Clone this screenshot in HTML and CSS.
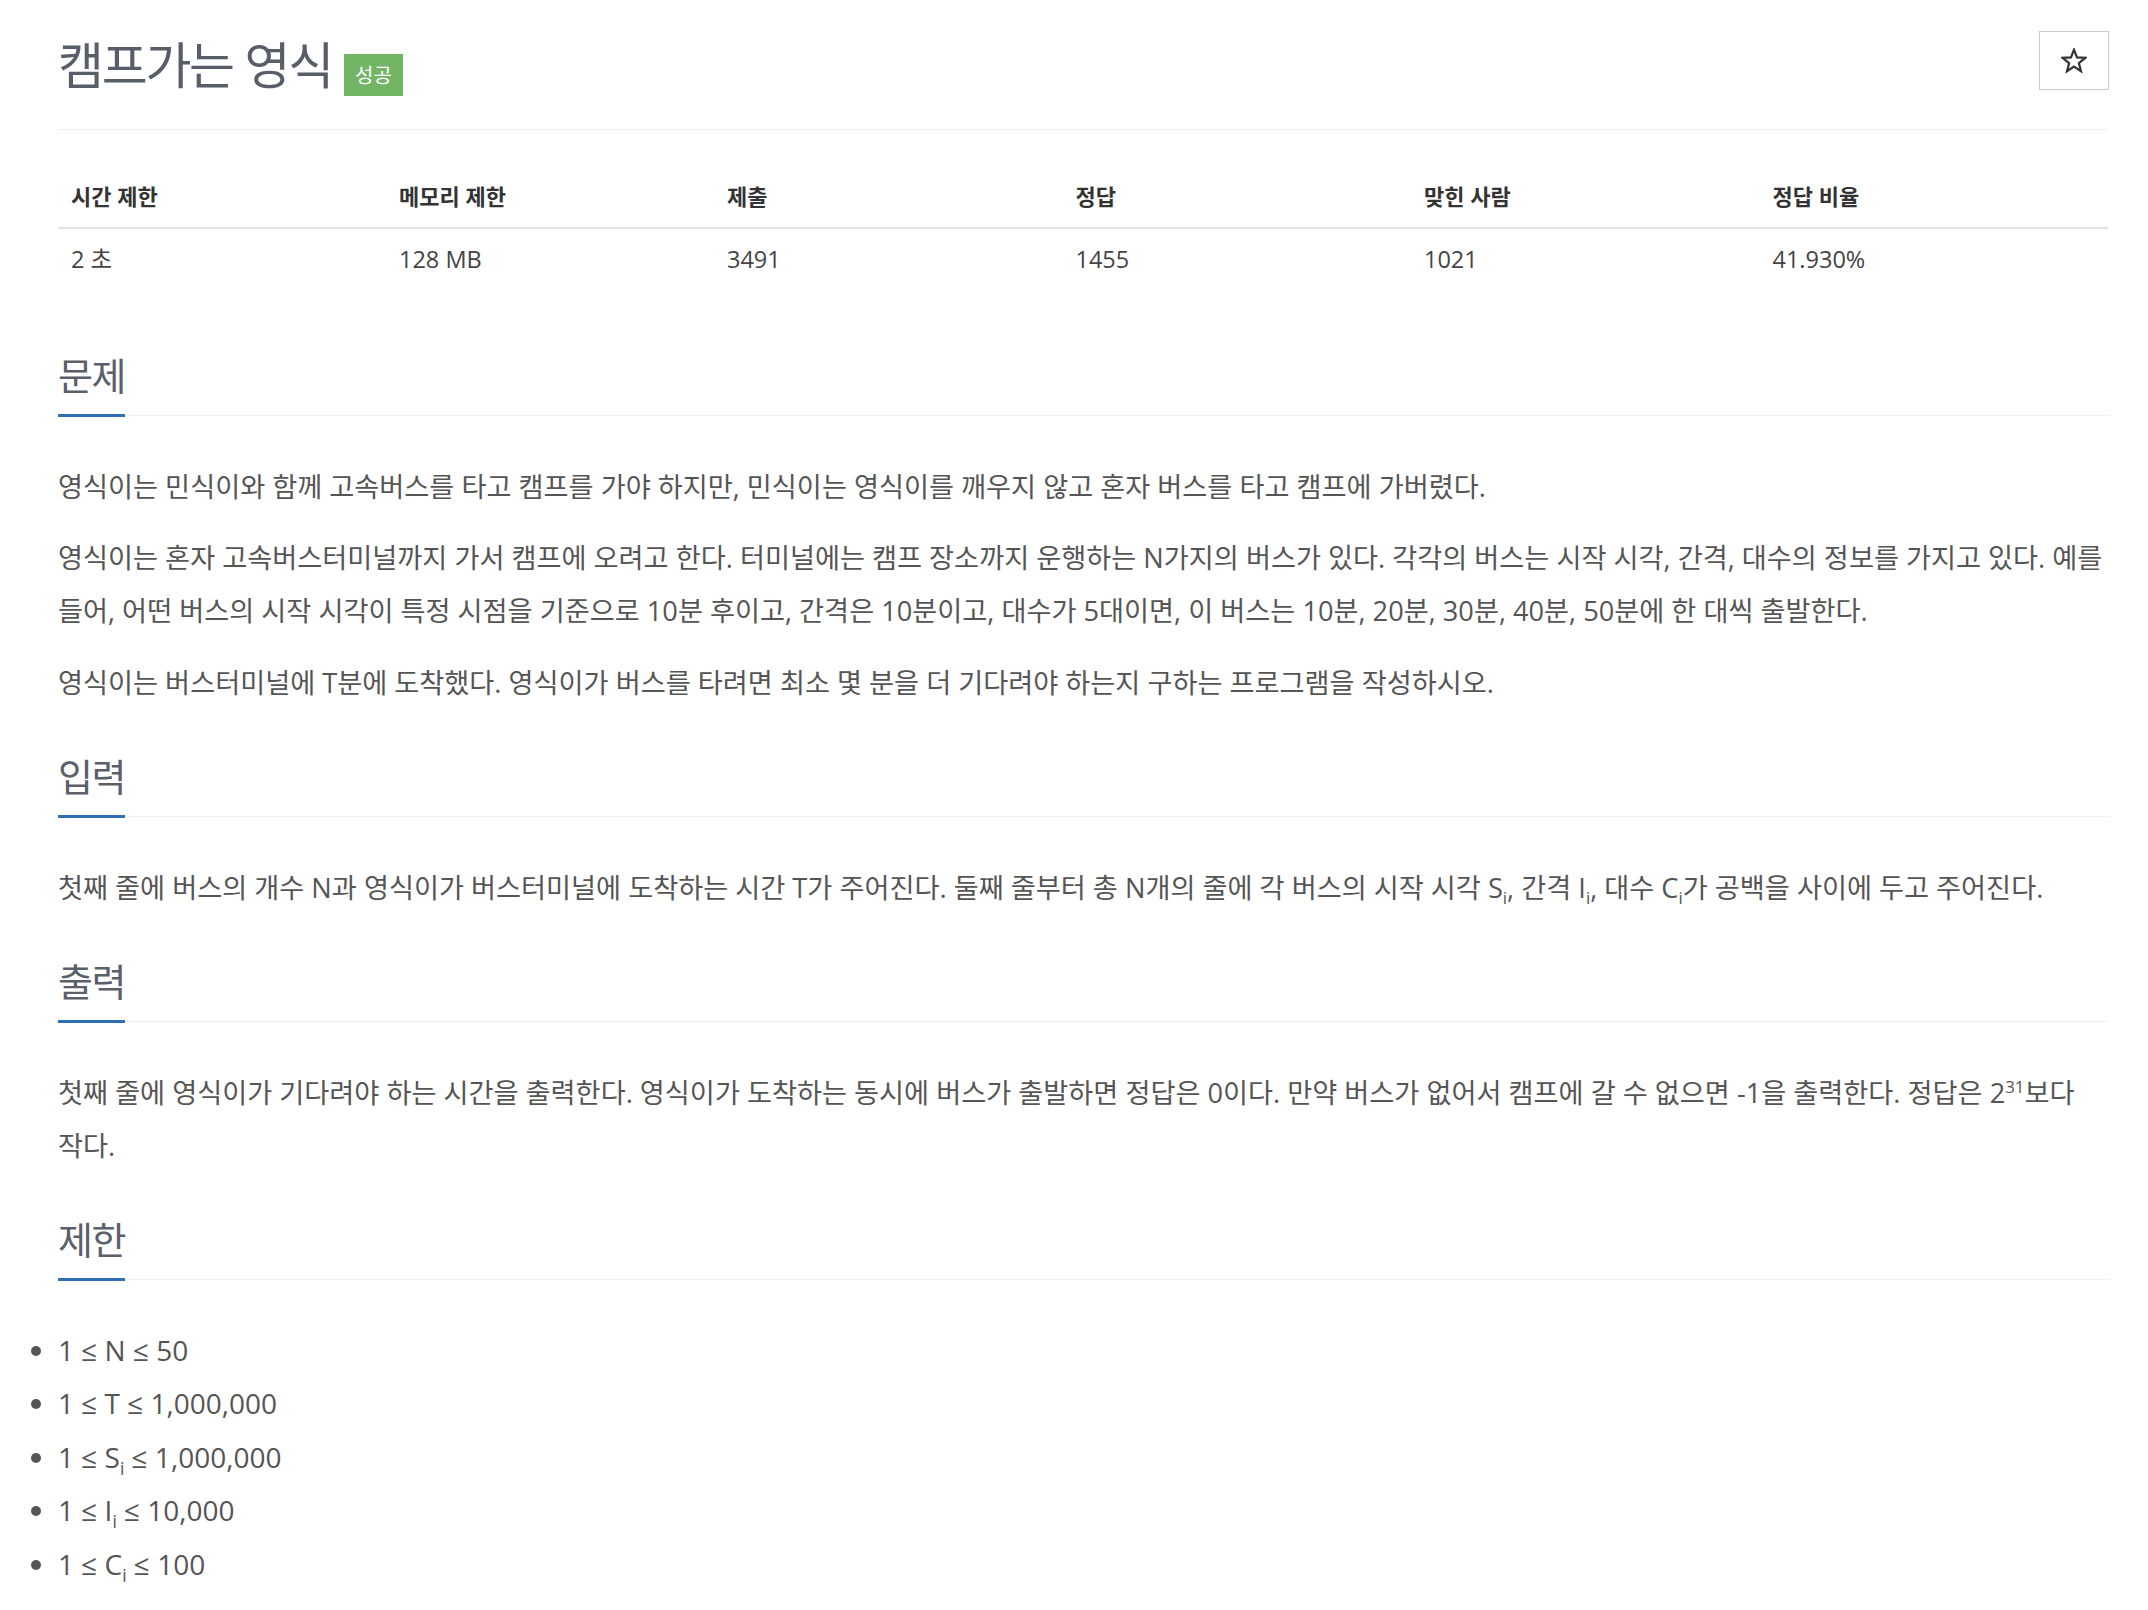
FILE: index.html
```html
<!DOCTYPE html>
<html lang="ko">
<head>
<meta charset="utf-8">
<title>캠프가는 영식</title>
<link rel="stylesheet" href="styles.css">
</head>
<body>
<div class="container">
  <div class="page-header">
    <div class="title">
      <h1 class="problem-title">캠프가는 영식</h1>
      <span class="badge">성공</span>
    </div>
    <button class="star-btn" type="button" aria-label="즐겨찾기">
      <svg width="26" height="26" viewBox="0 0 24 24"><polygon points="12,1.5 14.76,8.7 22.46,9.1 16.47,13.95 18.47,21.4 12,17.2 5.53,21.4 7.53,13.95 1.54,9.1 9.24,8.7" fill="none" stroke="#333" stroke-width="2" stroke-linejoin="miter"/></svg>
    </button>
  </div>

  <table class="info-table">
    <thead>
      <tr>
        <th class="w16">시간 제한</th>
        <th class="w16">메모리 제한</th>
        <th class="w17">제출</th>
        <th class="w17">정답</th>
        <th class="w17">맞힌 사람</th>
        <th class="w17">정답 비율</th>
      </tr>
    </thead>
    <tbody>
      <tr>
        <td>2 초</td>
        <td>128 MB</td>
        <td>3491</td>
        <td>1455</td>
        <td>1021</td>
        <td>41.930%</td>
      </tr>
    </tbody>
  </table>

  <section class="section first">
    <div class="headline"><h2>문제</h2></div>
    <p>영식이는 민식이와 함께 고속버스를 타고 캠프를 가야 하지만, 민식이는 영식이를 깨우지 않고 혼자 버스를 타고 캠프에 가버렸다.</p>
    <p>영식이는 혼자 고속버스터미널까지 가서 캠프에 오려고 한다. 터미널에는 캠프 장소까지 운행하는 N가지의 버스가 있다. 각각의 버스는 시작 시각, 간격, 대수의 정보를 가지고 있다. 예를 들어, 어떤 버스의 시작 시각이 특정 시점을 기준으로 10분 후이고, 간격은 10분이고, 대수가 5대이면, 이 버스는 10분, 20분, 30분, 40분, 50분에 한 대씩 출발한다.</p>
    <p>영식이는 버스터미널에 T분에 도착했다. 영식이가 버스를 타려면 최소 몇 분을 더 기다려야 하는지 구하는 프로그램을 작성하시오.</p>
  </section>

  <section class="section">
    <div class="headline"><h2>입력</h2></div>
    <p>첫째 줄에 버스의 개수 N과 영식이가 버스터미널에 도착하는 시간 T가 주어진다. 둘째 줄부터 총 N개의 줄에 각 버스의 시작 시각 S<sub>i</sub>, 간격 I<sub>i</sub>, 대수 C<sub>i</sub>가 공백을 사이에 두고 주어진다.</p>
  </section>

  <section class="section">
    <div class="headline"><h2>출력</h2></div>
    <p>첫째 줄에 영식이가 기다려야 하는 시간을 출력한다. 영식이가 도착하는 동시에 버스가 출발하면 정답은 0이다. 만약 버스가 없어서 캠프에 갈 수 없으면 -1을 출력한다. 정답은 <span class="nowrap">2<sup>31</sup>보다</span><br class="soft"> 작다.</p>
  </section>

  <section class="section">
    <div class="headline"><h2>제한</h2></div>
    <ul class="limits">
      <li>1 ≤ N ≤ 50</li>
      <li>1 ≤ T ≤ 1,000,000</li>
      <li>1 ≤ S<sub>i</sub> ≤ 1,000,000</li>
      <li>1 ≤ I<sub>i</sub> ≤ 10,000</li>
      <li>1 ≤ C<sub>i</sub> ≤ 100</li>
    </ul>
  </section>
</div>
</body>
</html>
```

FILE: styles.css
```css
html, body {
  margin: 0;
  padding: 0;
  background: #fff;
}

body {
  font-family: "Open Sans", "Noto Sans CJK KR", sans-serif;
  color: #555;
}

.container {
  padding: 0 40px 20px 58px;
}

/* ---------- header ---------- */
.page-header {
  display: flex;
  justify-content: space-between;
  align-items: flex-start;
  box-sizing: border-box;
  height: 130px;
  padding-top: 31px;
  border-bottom: 1px solid #eee;
}

.title {
  display: flex;
  align-items: flex-start;
}

.problem-title {
  margin: 0;
  font-family: "Noto Sans CJK KR", "Open Sans", sans-serif;
  font-size: 50px;
  font-weight: 400;
  letter-spacing: -2.3px;
  line-height: 62px;
  color: #585e69;
}

.badge {
  margin: 23px 0 0 12px;
  width: 59px;
  height: 42px;
  background: #72b565;
  color: #fff;
  font-family: "Noto Sans CJK KR", sans-serif;
  font-size: 20px;
  line-height: 42px;
  text-align: center;
}

.star-btn {
  box-sizing: border-box;
  width: 70px;
  height: 59px;
  margin-right: -1px;
  padding: 0;
  border: 1px solid #ccc;
  background: #fff;
  display: flex;
  align-items: center;
  justify-content: center;
}

/* ---------- table ---------- */
.info-table {
  width: 100%;
  margin-top: 39px;
  border-collapse: collapse;
  border-spacing: 0;
}

.w16 { width: 16%; }
.w17 { width: 17%; }

.info-table th {
  padding: 12px 13px 16px;
  text-align: left;
  font-size: 22px;
  font-weight: 700;
  line-height: 30px;
  color: #333;
  border-bottom: 2px solid #e2e2e2;
}

.info-table td {
  padding: 15px 13px;
  font-size: 23.5px;
  line-height: 30px;
  color: #444;
}

/* ---------- sections ---------- */
.section {
  display: flow-root;
  margin-top: 23.5px;
}

.section.first {
  margin-top: 60.5px;
}

.headline {
  border-bottom: 1px dotted #e3e3e3;
  margin-bottom: 44px;
}

.headline h2 {
  display: inline-block;
  margin: 0 0 -2px;
  padding-bottom: 16px;
  font-family: "Noto Sans CJK KR", "Open Sans", sans-serif;
  font-size: 38px;
  font-weight: 400;
  letter-spacing: -1.5px;
  line-height: 48px;
  color: #5a5f6a;
  border-bottom: 3px solid #2f6db5;
}

.section p {
  margin: 0 0 18.5px;
  font-size: 27.2px;
  line-height: 53px;
  word-break: keep-all;
  color: #555;
}

.nowrap {
  white-space: nowrap;
}

sub, sup {
  font-size: 0.62em;
  line-height: 0;
}

/* ---------- limits list ---------- */
.limits {
  margin: 0;
  padding: 0;
  list-style: disc outside;
}

.limits li {
  font-size: 28px;
  line-height: 53.5px;
  color: #555;
}
```
